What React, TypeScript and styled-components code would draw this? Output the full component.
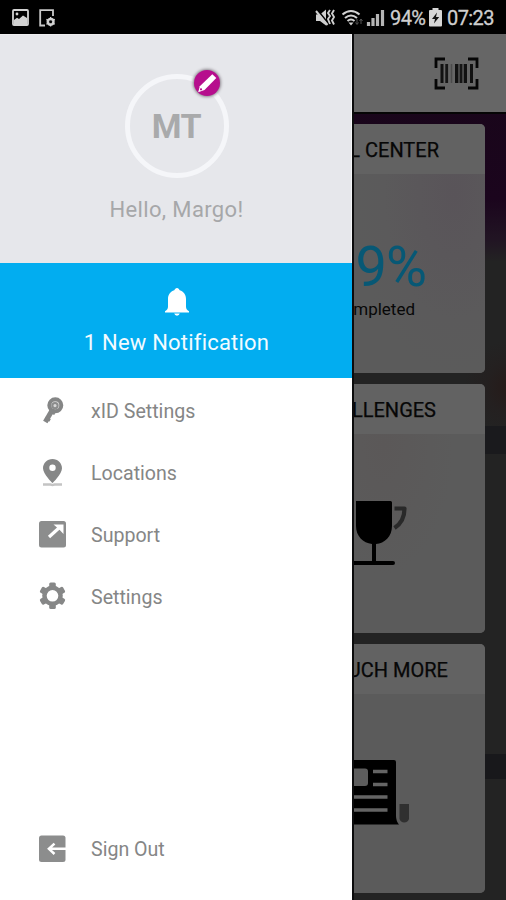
import React from "react";
import styled, { createGlobalStyle } from "styled-components";

const GlobalStyle = createGlobalStyle`
  * { box-sizing: border-box; }
  body { margin: 0; background: #000; font-family: Roboto, sans-serif; }
  svg { display: block; flex: none; }
`;

const Screen = styled.div`
  width: 506px;
  height: 900px;
  display: grid;
  grid-template-rows: 34px 866px;
  overflow: hidden;
`;

const StatusBar = styled.header`
  display: flex;
  justify-content: space-between;
  background: #000;
  color: #cfcfcf;
  padding: 0 12px 0 12px;
`;

const StatusGroup = styled.div<{ $gap: number }>`
  display: flex;
  align-items: center;
  gap: ${(p) => p.$gap}px;
  padding-top: 1px;
`;

const StatusText = styled.span<{ $width: number }>`
  width: ${(p) => p.$width}px;
  font-size: 20px;
  line-height: 34px;
  letter-spacing: -0.6px;
  white-space: nowrap;
  -webkit-text-stroke: 0.3px #cfcfcf;
`;

const Body = styled.div`
  display: grid;
  grid-template-columns: 352px 154px;
  min-height: 0;
`;

const Drawer = styled.aside`
  display: flex;
  flex-direction: column;
  background: #fff;
`;

const Profile = styled.section`
  height: 229px;
  background: #e6e7eb;
  border-right: 1px solid #f6f7f9;
  border-top: 1px solid #eeeef0;
  display: flex;
  flex-direction: column;
  align-items: center;
  padding: 39px 0 0 2px;
`;

const Avatar = styled.div`
  position: relative;
  width: 104px;
  height: 104px;
  border: 5.5px solid #f5f6f9;
  border-radius: 50%;
  display: flex;
  align-items: center;
  justify-content: center;
  color: #a9aaab;
  font-size: 34px;
  font-weight: 700;
  letter-spacing: -0.4px;
`;

const EditBadge = styled.div`
  position: absolute;
  top: -9px;
  right: 4px;
  width: 26px;
  height: 26px;
  border-radius: 50%;
  background: #b60e8d;
  box-shadow: 0 0 3px 1px #8b858d;
`;

const Greeting = styled.div`
  margin-top: 18px;
  color: #a6a7a9;
  font-size: 22px;
  line-height: 28px;
  letter-spacing: 0.35px;
`;

const Notice = styled.section`
  height: 115px;
  background: #02adf0;
  color: #f3fbff;
  display: flex;
  flex-direction: column;
  align-items: center;
  padding: 24px 0 0 1px;
`;

const NoticeText = styled.div`
  margin-top: 11px;
  font-size: 22px;
  line-height: 30px;
  letter-spacing: 0.2px;
`;

const Menu = styled.nav`
  flex: 1;
  display: flex;
  flex-direction: column;
  padding-top: 2px;
`;

const MenuItem = styled.div<{ $last?: boolean }>`
  height: 62px;
  display: flex;
  align-items: center;
  gap: 24px;
  padding-left: 38px;
  color: #858686;
  font-size: 19.6px;
  letter-spacing: 0;
  margin-top: ${(p) => (p.$last ? "auto" : "0")};
  margin-bottom: ${(p) => (p.$last ? "20px" : "0")};
`;

const Peek = styled.main`
  display: flex;
  flex-direction: column;
  overflow: hidden;
  border-left: 2px solid #0c0c0d;
  background:
    linear-gradient(#1a1a1d, #1a1a1d) 130px 392px / 24px 28px no-repeat,
    linear-gradient(#18181b, #18181b) 130px 720px / 24px 25px no-repeat,
    radial-gradient(circle at 158px 354px, #261a18 0, #242020 26px, transparent 48px),
    linear-gradient(#180619 0, #1b051d 165px, #211423 205px, #232323 228px);
`;

const AppBar = styled.div`
  height: 80px;
  flex: none;
  background: #666;
  border-bottom: 2px solid #050505;
  display: flex;
  justify-content: flex-end;
  align-items: center;
  padding-right: 27px;
`;

const CardList = styled.div`
  display: flex;
  flex-direction: column;
  gap: 11px;
  padding: 10px 21px 0 0;
`;

const Card = styled.article`
  height: 249px;
  display: flex;
  flex-direction: column;
  border-radius: 0 5px 5px 0;
  overflow: hidden;
  background: #5b5b5b;
`;

const CardTitle = styled.h2<{ $inset: number }>`
  margin: 0;
  height: 50px;
  flex: none;
  display: flex;
  justify-content: flex-end;
  align-items: center;
  padding: 2px ${(p) => p.$inset}px 0 0;
  background: #626262;
  color: #070707;
  font-size: 20px;
  font-weight: 400;
  -webkit-text-stroke: 0.25px #070707;
  letter-spacing: 0;
  white-space: nowrap;
`;

const CardBody = styled.div<{ $tint?: string }>`
  flex: 1;
  display: flex;
  flex-direction: column;
  background: ${(p) => p.$tint || "#5b5b5b"};
`;

const Percent = styled.div`
  display: flex;
  justify-content: flex-end;
  padding: 60px 59px 0 0;
  color: #075875;
  font-size: 56px;
  line-height: 66px;
  letter-spacing: -1px;
`;

const Caption = styled.div`
  display: flex;
  justify-content: flex-end;
  margin-top: -1px;
  padding: 0 70px 0 0;
  font-size: 17px;
  line-height: 20px;
  color: #080808;
`;

const ArtSlot = styled.div<{ $top: number }>`
  padding-top: ${(p) => p.$top}px;
`;

const menu = [
  { label: "xID Settings", icon: <KeyIcon /> },
  { label: "Locations", icon: <PinIcon /> },
  { label: "Support", icon: <SupportIcon /> },
  { label: "Settings", icon: <GearIcon /> },
];

function KeyIcon() {
  return (
    <svg width="29" height="30" viewBox="0 0 29 30">
      <path d="M14 14.5 7.300 26" stroke="#858686" strokeWidth="5" />
      <path d="m7.500 21.500 4.500 3" stroke="#858686" strokeWidth="3" />
      <circle cx="17.300" cy="9.300" r="6" fill="#d7d7d7" stroke="#858686" strokeWidth="4" />
      <circle cx="17" cy="9.600" r="2.600" fill="none" stroke="#8b8c8c" strokeWidth="2" />
      <path d="m12 15 5 2.500" stroke="#858686" strokeWidth="3.500" />
    </svg>
  );
}

function PinIcon() {
  return (
    <svg width="29" height="30" viewBox="0 0 29 30">
      <path fillRule="evenodd" fill="#868787" d="M14.500 1C9.200 1 5 5.200 5 10.200 5 16 14.500 25 14.500 25S24 16 24 10.200C24 5.200 19.800 1 14.500 1Zm0 5.600a3.200 3.200 0 1 1 0 6.400 3.200 3.200 0 0 1 0-6.400Z" />
      <path d="M5 26.500h7.500l2 .6 2-.6H24" fill="none" stroke="#c4c4c4" strokeWidth="2.400" />
    </svg>
  );
}

function SupportIcon() {
  return (
    <svg width="29" height="30" viewBox="0 0 29 30">
      <rect x="1" y="1" width="27" height="26.500" rx="2.500" fill="#8c8d8d" />
      <path d="M11 17 22 7" fill="none" stroke="#fff" strokeWidth="3.200" />
      <path d="M15.500 4.500h10v9.500l-3.300-3.500-3.500-3.300Z" fill="#fff" />
    </svg>
  );
}

function GearIcon() {
  return (
    <svg width="29" height="30" viewBox="0 0 29 30">
      <g transform="translate(14.500 13.800)" fill="#868787">
        {[0, 60, 120].map((a) => (
          <rect key={a} x="-3.300" y="-13.300" width="6.600" height="26.600" rx="1.500" transform={`rotate(${a})`} />
        ))}
        <circle r="10.300" />
        <circle r="5.800" fill="#fff" />
      </g>
    </svg>
  );
}

function SignOutIcon() {
  return (
    <svg width="29" height="30" viewBox="0 0 29 30">
      <rect x="1" y="1.500" width="26.500" height="26.500" rx="2.500" fill="#8c8d8d" />
      <path d="M28 14.800H11M16.500 9.600l-5.600 5.200 5.600 5.200" fill="none" stroke="#fff" strokeWidth="2.500" />
    </svg>
  );
}

function BellIcon() {
  return (
    <svg width="26" height="30" viewBox="0 0 26 30">
      <path fill="#fff" d="M13 1c-1.300 0-2.200 1-2.700 2.300C6.300 4.600 4 8 4 12v7.500c0 2.200-.8 3.500-3 4.700V25.500h24v-1.300c-2.200-1.200-3-2.500-3-4.700V12c0-4-2.300-7.400-6.300-8.700C15.200 2 14.300 1 13 1ZM10.200 26.500a2.900 2.900 0 0 0 5.600 0Z" />
    </svg>
  );
}

function PencilIcon() {
  return (
    <svg width="26" height="26" viewBox="0 0 26 26">
      <path fill="#fff" d="m18.300 4.300 4 3.700L10.500 20l-6.300 2.200 1.600-6Z" />
      <circle cx="7" cy="19.300" r="1.100" fill="#b60e8d" />
    </svg>
  );
}

function PictureIcon() {
  return (
    <svg width="17" height="17" viewBox="0 0 17 17">
      <rect x="1" y="1" width="15" height="15" rx="1" fill="none" stroke="#d2d2d2" strokeWidth="1.800" />
      <path d="M2 13V11l3-2.200 2 1.200 4-3.500 4 2.500v6H2Z" fill="#d2d2d2" />
      <circle cx="5" cy="5" r="1.400" fill="#d2d2d2" />
    </svg>
  );
}

function DeviceIcon() {
  return (
    <svg width="17" height="18" viewBox="0 0 17 18">
      <path d="M14 7V1.200H1.200v15.300H6" fill="none" stroke="#c9c9c9" strokeWidth="1.800" />
      <circle cx="11.600" cy="12.800" r="2.900" fill="none" stroke="#d2d2d2" strokeWidth="2.400" />
      <path d="M11.600 8v9.600M7.400 10.400l8.400 4.800M7.400 15.200l8.400-4.800" stroke="#d2d2d2" strokeWidth="1.300" />
      <circle cx="11.600" cy="12.800" r="1.500" fill="#000" />
    </svg>
  );
}

function SignalIcons() {
  return (
    <svg width="70" height="20" viewBox="0 0 70 20">
      <path d="M1 6.500h4l6-5v16l-6-4.500H1Z" fill="#cfcfcf" />
      <path d="m2 1.500 12 15" stroke="#000" strokeWidth="2" />
      <path d="m1 3 11.500 14" stroke="#cfcfcf" strokeWidth="2" />
      <path d="m15 2-2 3 2 3-2 3 2 5M19 2l-2 3.500L19 9l-2 3.500 2 4" fill="none" stroke="#cfcfcf" strokeWidth="1.900" />
      <path d="M27.500 6.500q8.500-7 17 0M30 10q6-5 12 0M32.500 13q3.500-3 7 0" fill="none" stroke="#d2d2d2" strokeWidth="2.100" />
      <path d="m36 17.500-2.500-3h5Z" fill="#d2d2d2" />
      <path d="M42 11v5m-1.500-1.500L42 16.500l1.500-2M46 16v-5m-1.500 2 1.500-2 1.500 2" stroke="#555" fill="none" />
      <path d="M53.500 18v-4M58 18v-8M62.500 18V6M67.500 18V2" stroke="#b5b5b5" strokeWidth="3.200" />
    </svg>
  );
}

function BatteryIcon() {
  return (
    <svg width="13" height="19" viewBox="0 0 13 19">
      <path fill="#d6d6d6" d="M3.500 0h6v2H12a1 1 0 0 1 1 1v14.500a1 1 0 0 1-1 1H1a1 1 0 0 1-1-1V3a1 1 0 0 1 1-1h2.500Z" />
      <path d="M8 4.500 3 11h3L5 15.500 10.200 9H7Z" fill="#111" />
    </svg>
  );
}

function BarcodeIcon() {
  return (
    <svg width="45" height="33" viewBox="0 0 45 33">
      <path d="M11 2H2v9M34 2h9v9M2 22v9h9M43 22v9h-9" fill="none" stroke="#060606" strokeWidth="2.800" />
      <path d="M8 7v19M22.500 7v19M31.500 7v19M37.500 7v19" stroke="#111" strokeWidth="3" />
      <path d="M12.700 7v19M27 7v19" stroke="#161616" strokeWidth="2.800" />
      <path d="M17.500 7v19" stroke="#4b4b4b" strokeWidth="1.500" />
      <path d="M29.300 7v19M24.500 7v19" stroke="#444" strokeWidth="1" />
    </svg>
  );
}

function CupIcon() {
  return (
    <svg width="60" height="68" viewBox="0 0 60 68">
      <path fill="#000" d="M2.500 1h34q1.500 0 1.500 1.500V26c0 10.500-7.500 17.500-16 18v17h17a2 2 0 0 1 0 4H-4v-4h22V44C9 43 2 36 2 26V1Z" />
      <path d="M40.500 8.500H50.500c0 9-3 15-10 19.500" fill="none" stroke="#292929" strokeWidth="4.200" strokeLinejoin="round" />
    </svg>
  );
}

function NewsIcon() {
  return (
    <svg width="60" height="68" viewBox="0 0 60 68">
      <path fill="#000" d="M0 1h40q2 0 2 2v54q0 5 3 8.500H0Z" />
      <path d="M0 9.500h11q3 0 3 3v11.500q0 3-3 3H0Z" fill="#5d5d5d" />
      <path d="M19 12.500h14.500M19 25.500h14.500M0 38h33.500M0 51h33.500" stroke="#646464" strokeWidth="3.600" />
      <path d="M45.500 45H55v15a5 5 0 0 1-9.500 0Z" fill="#303030" />
    </svg>
  );
}

export default function App() {
  return (
    <>
      <GlobalStyle />
      <Screen>
        <StatusBar>
          <StatusGroup $gap={10}>
            <PictureIcon />
            <DeviceIcon />
          </StatusGroup>
          <StatusGroup $gap={5}>
            <SignalIcons />
            <StatusText $width={34}>94%</StatusText>
            <BatteryIcon />
            <StatusText $width={47}>07:23</StatusText>
          </StatusGroup>
        </StatusBar>
        <Body>
          <Drawer>
            <Profile>
              <Avatar>
                MT
                <EditBadge>
                  <PencilIcon />
                </EditBadge>
              </Avatar>
              <Greeting>Hello, Margo!</Greeting>
            </Profile>
            <Notice>
              <BellIcon />
              <NoticeText>1 New Notification</NoticeText>
            </Notice>
            <Menu>
              {menu.map((m) => (
                <MenuItem key={m.label}>
                  {m.icon}
                  {m.label}
                </MenuItem>
              ))}
              <MenuItem $last>
                <SignOutIcon />
                Sign Out
              </MenuItem>
            </Menu>
          </Drawer>
          <Peek>
            <AppBar>
              <BarcodeIcon />
            </AppBar>
            <CardList>
              <Card>
                <CardTitle $inset={46}>L CENTER</CardTitle>
                <CardBody $tint="radial-gradient(ellipse at 100px 20px, #595459, #5b5a5b 70px, #5b5b5b 100px)">
                  <Percent>9%</Percent>
                  <Caption>ompleted</Caption>
                </CardBody>
              </Card>
              <Card>
                <CardTitle $inset={49}>LLENGES</CardTitle>
                <CardBody $tint="radial-gradient(ellipse at 30px 10px, #5b5858, #5b5b5b 70px)">
                  <ArtSlot $top={66}>
                    <CupIcon />
                  </ArtSlot>
                </CardBody>
              </Card>
              <Card>
                <CardTitle $inset={37}>UCH MORE</CardTitle>
                <CardBody>
                  <ArtSlot $top={65}>
                    <NewsIcon />
                  </ArtSlot>
                </CardBody>
              </Card>
            </CardList>
          </Peek>
        </Body>
      </Screen>
    </>
  );
}
